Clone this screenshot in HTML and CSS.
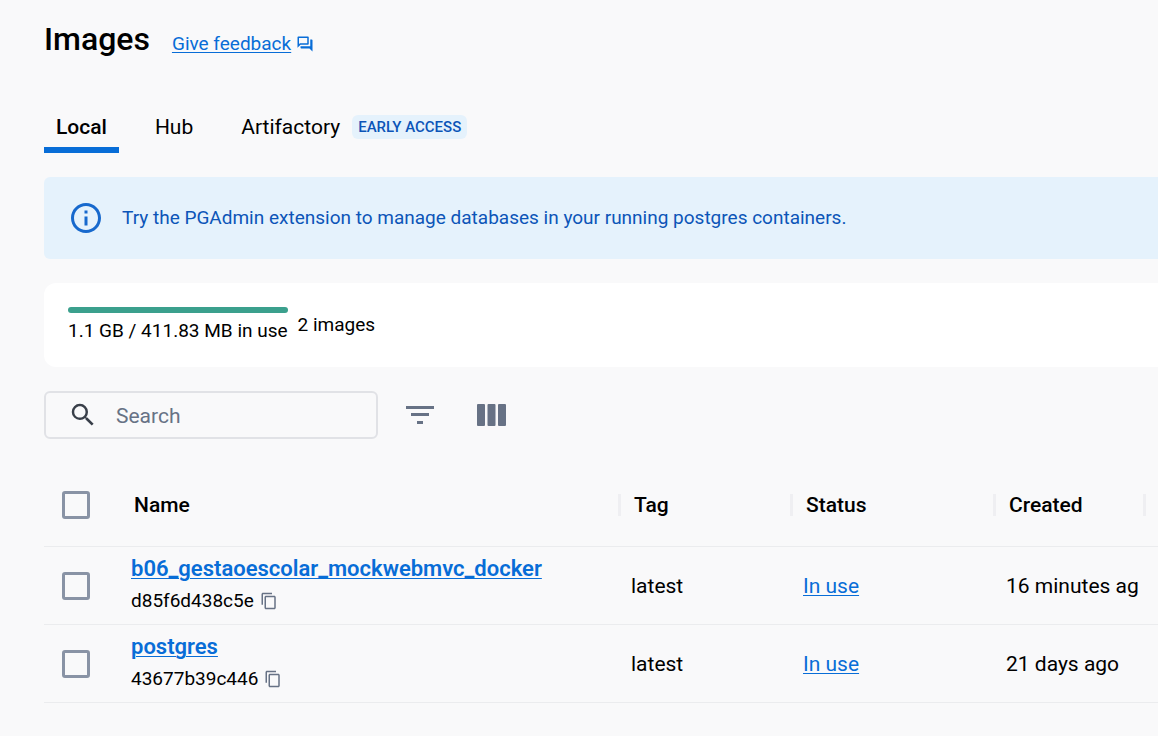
FILE: index.html
```html
<!DOCTYPE html>
<html lang="en">
<head>
<meta charset="utf-8">
<title>Images</title>
<link rel="stylesheet" href="styles.css">
</head>
<body>
<main class="page">
  <header class="page-header">
    <h1 class="title">Images</h1>
    <a class="link feedback" href="#feedback"><span class="feedback-text">Give feedback</span>
      <svg class="icon-feedback" viewBox="0 0 24 24" aria-hidden="true"><path fill="currentColor" d="M15 4v7H5.170L4 12.170V4h11m1-2H3c-.55 0-1 .45-1 1v14l4-4h10c.55 0 1-.45 1-1V3c0-.55-.45-1-1-1zm5 4h-2v9H6v2c0 .55.45 1 1 1h11l4 4V7c0-.55-.45-1-1-1z"/></svg>
    </a>
  </header>

  <nav class="tabs">
    <a class="tab tab-active" href="#local" aria-current="page">Local</a>
    <a class="tab" href="#hub">Hub</a>
    <a class="tab" href="#artifactory">Artifactory <span class="badge">EARLY ACCESS</span></a>
  </nav>

  <section class="banner">
    <svg class="icon-info" viewBox="0 0 24 24" aria-hidden="true"><path fill="currentColor" d="M11 7h2v2h-2zm0 4h2v6h-2zm1-9C6.480 2 2 6.480 2 12s4.480 10 10 10 10-4.480 10-10S17.520 2 12 2zm0 18c-4.410 0-8-3.590-8-8s3.590-8 8-8 8 3.590 8 8-3.590 8-8 8z"/></svg>
    <p class="banner-text">Try the PGAdmin extension to manage databases in your running postgres containers.</p>
  </section>

  <section class="summary">
    <div class="usage">
      <div class="usage-bar"></div>
      <span>1.1 GB / 411.83 MB in use</span>
    </div>
    <span class="count">2 images</span>
  </section>

  <div class="toolbar">
    <label class="search">
      <svg class="icon-search" viewBox="0 0 24 24" aria-hidden="true"><path fill="currentColor" d="M15.500 14h-.79l-.28-.27A6.471 6.471 0 0 0 16 9.500 6.500 6.500 0 1 0 9.500 16c1.610 0 3.090-.59 4.230-1.570l.27.28v.79l5 4.990L20.490 19l-4.990-5zm-6 0C7.010 14 5 11.990 5 9.500S7.010 5 9.500 5 14 7.010 14 9.500 11.990 14 9.500 14z"/></svg>
      <input class="search-input" type="text" placeholder="Search" aria-label="Search">
    </label>
    <button class="tool" type="button" aria-label="Filter">
      <svg class="icon-tool" viewBox="0 0 36 36" aria-hidden="true"><path fill="currentColor" d="M4 9h28v3H4zM9 16h18v3H9zM15 24h6v3h-6z"/></svg>
    </button>
    <button class="tool" type="button" aria-label="Columns">
      <svg class="icon-tool" viewBox="0 0 36 36" aria-hidden="true"><g fill="currentColor"><rect x="4" y="7" width="8" height="22" rx="1"/><rect x="14.500" y="7" width="8" height="22" rx="1"/><rect x="25" y="7" width="8" height="22" rx="1"/></g></svg>
    </button>
  </div>

  <table class="images">
    <colgroup><col class="col-check"><col><col class="col-tag"><col class="col-status"><col class="col-created"><col class="col-end"></colgroup>
    <thead>
      <tr>
        <th class="check-cell"><input class="check" type="checkbox" aria-label="Select all images"></th>
        <th class="head-name">Name</th>
        <th><span class="head">Tag</span></th>
        <th><span class="head">Status</span></th>
        <th><span class="head">Created</span></th>
        <th><span class="head" aria-hidden="true"></span></th>
      </tr>
    </thead>
    <tbody>
      <tr>
        <td class="check-cell"><input class="check" type="checkbox" aria-label="Select b06_gestaoescolar_mockwebmvc_docker"></td>
        <td class="name-cell">
          <a class="link name" href="#b06">b06_gestaoescolar_mockwebmvc_docker</a>
          <div class="hash">d85f6d438c5e
            <button class="copy" type="button" aria-label="Copy ID"><svg class="icon-copy" viewBox="0 0 24 24" aria-hidden="true"><path fill="currentColor" d="M16 1H4c-1.100 0-2 .9-2 2v14h2V3h12V1zm3 4H8c-1.100 0-2 .9-2 2v14c0 1.100.9 2 2 2h11c1.100 0 2-.9 2-2V7c0-1.100-.9-2-2-2zm0 16H8V7h11v14z"/></svg></button>
          </div>
        </td>
        <td>latest</td>
        <td><a class="link" href="#b06-containers">In use</a></td>
        <td class="created">16 minutes ag</td>
        <td></td>
      </tr>
      <tr>
        <td class="check-cell"><input class="check" type="checkbox" aria-label="Select postgres"></td>
        <td class="name-cell">
          <a class="link name" href="#postgres">postgres</a>
          <div class="hash">43677b39c446
            <button class="copy" type="button" aria-label="Copy ID"><svg class="icon-copy" viewBox="0 0 24 24" aria-hidden="true"><path fill="currentColor" d="M16 1H4c-1.100 0-2 .9-2 2v14h2V3h12V1zm3 4H8c-1.100 0-2 .9-2 2v14c0 1.100.9 2 2 2h11c1.100 0 2-.9 2-2V7c0-1.100-.9-2-2-2zm0 16H8V7h11v14z"/></svg></button>
          </div>
        </td>
        <td>latest</td>
        <td><a class="link" href="#postgres-containers">In use</a></td>
        <td class="created">21 days ago</td>
        <td></td>
      </tr>
    </tbody>
  </table>
</main>
</body>
</html>
```
FILE: styles.css
```css
* { box-sizing: border-box; }

body {
  margin: 0;
  background: #f9f9fa;
  color: #000;
  font-family: Roboto, "Liberation Sans", sans-serif;
  font-size: 21px;
  line-height: 24px;
}

.page {
  display: flex;
  flex-direction: column;
  gap: 24px;
  padding: 15px 0 32px 44px;
}

.link {
  color: #086dd7;
  text-decoration: underline;
  text-decoration-thickness: 1px;
  text-underline-offset: 2px;
}

.page-header {
  display: flex;
  align-items: center;
  gap: 22px;
}

.title {
  margin: 0;
  font-size: 32px;
  line-height: 48px;
  font-weight: 500;
}

.feedback {
  display: flex;
  align-items: center;
  gap: 5px;
  padding-top: 10px;
  font-size: 19px;
  text-decoration: none;
}

.feedback-text {
  text-decoration: underline;
  text-decoration-thickness: 1px;
  text-underline-offset: 2px;
}

.icon-feedback { width: 18px; height: 18px; }

.tabs {
  display: flex;
  gap: 24px;
  padding-top: 16px;
}

.tab {
  display: flex;
  align-items: center;
  gap: 12px;
  height: 50px;
  padding: 4px 12px 0;
  border-bottom: 6px solid transparent;
  color: #000;
  text-decoration: none;
}

.tab-active { border-color: #086dd7; font-weight: 500; }

.badge {
  padding: 0 6px;
  border-radius: 6px;
  background: #e5f2fc;
  color: #0c55b8;
  font-size: 15px;
  font-weight: 500;
}

.banner {
  display: flex;
  align-items: center;
  gap: 18px;
  padding: 23px 24px;
  border-radius: 6px 0 0 6px;
  background: #e5f2fc;
  color: #0c55b8;
}

.icon-info { width: 36px; height: 36px; color: #1769cd; }

.banner-text { margin: 0; font-size: 19px; }

.summary {
  display: flex;
  align-items: center;
  gap: 10px;
  padding: 24px;
  border-radius: 12px 0 0 12px;
  background: #fff;
  font-size: 19px;
}

.usage { display: flex; flex-direction: column; gap: 6px; }

.usage-bar { height: 6px; border-radius: 3px; background: #3ba08d; }

.toolbar {
  display: flex;
  align-items: center;
}

.search {
  display: flex;
  align-items: center;
  gap: 18px;
  width: 334px;
  height: 48px;
  margin-right: 24px;
  padding: 0 22px;
  border: 2px solid #e1e2e6;
  border-radius: 6px;
}

.icon-search { flex: none; width: 30px; height: 30px; color: #393f49; }

.search-input {
  flex: 1;
  min-width: 0;
  padding: 2px 0 0;
  border: 0;
  outline: 0;
  background: none;
  color: #000;
  font: inherit;
}

.search-input::placeholder { color: #677285; opacity: 1; }

.tool {
  display: flex;
  margin-right: 35px;
  padding: 0;
  border: 0;
  background: none;
  color: #677285;
}

.icon-tool { width: 36px; height: 36px; }

.images {
  width: 100%;
  border-collapse: separate;
  border-spacing: 0;
  table-layout: fixed;
}

.col-check { width: 75px; }
.col-tag { width: 172px; }
.col-status { width: 203px; }
.col-created { width: 150px; }
.col-end { width: 15px; }

.images th {
  height: 84px;
  padding: 0;
  border-bottom: 1px solid #ebecee;
  font-weight: 500;
  text-align: left;
}

.images td {
  height: 78px;
  padding: 0 0 0 13px;
  border-bottom: 1px solid #ebecee;
}

.images .head-name { padding-left: 15px; }

.head {
  display: block;
  height: 22px;
  padding-left: 13px;
  border-left: 3px solid #efeff2;
  line-height: 22px;
}

.images .check-cell { padding: 0 0 0 18px; }

.images .name-cell { padding: 0 0 2px 12px; }

.images .created { white-space: nowrap; }

.check {
  display: block;
  width: 28px;
  height: 28px;
  margin: 0;
  appearance: none;
  border: 3px solid #8993a5;
  border-radius: 3px;
}

.name { font-size: 22px; font-weight: 600; }

.hash {
  display: flex;
  align-items: center;
  gap: 6px;
  padding-top: 8px;
  font-size: 19px;
}

.copy {
  display: flex;
  padding: 0;
  border: 0;
  background: none;
  color: #677285;
}

.icon-copy { width: 18px; height: 18px; }
```
